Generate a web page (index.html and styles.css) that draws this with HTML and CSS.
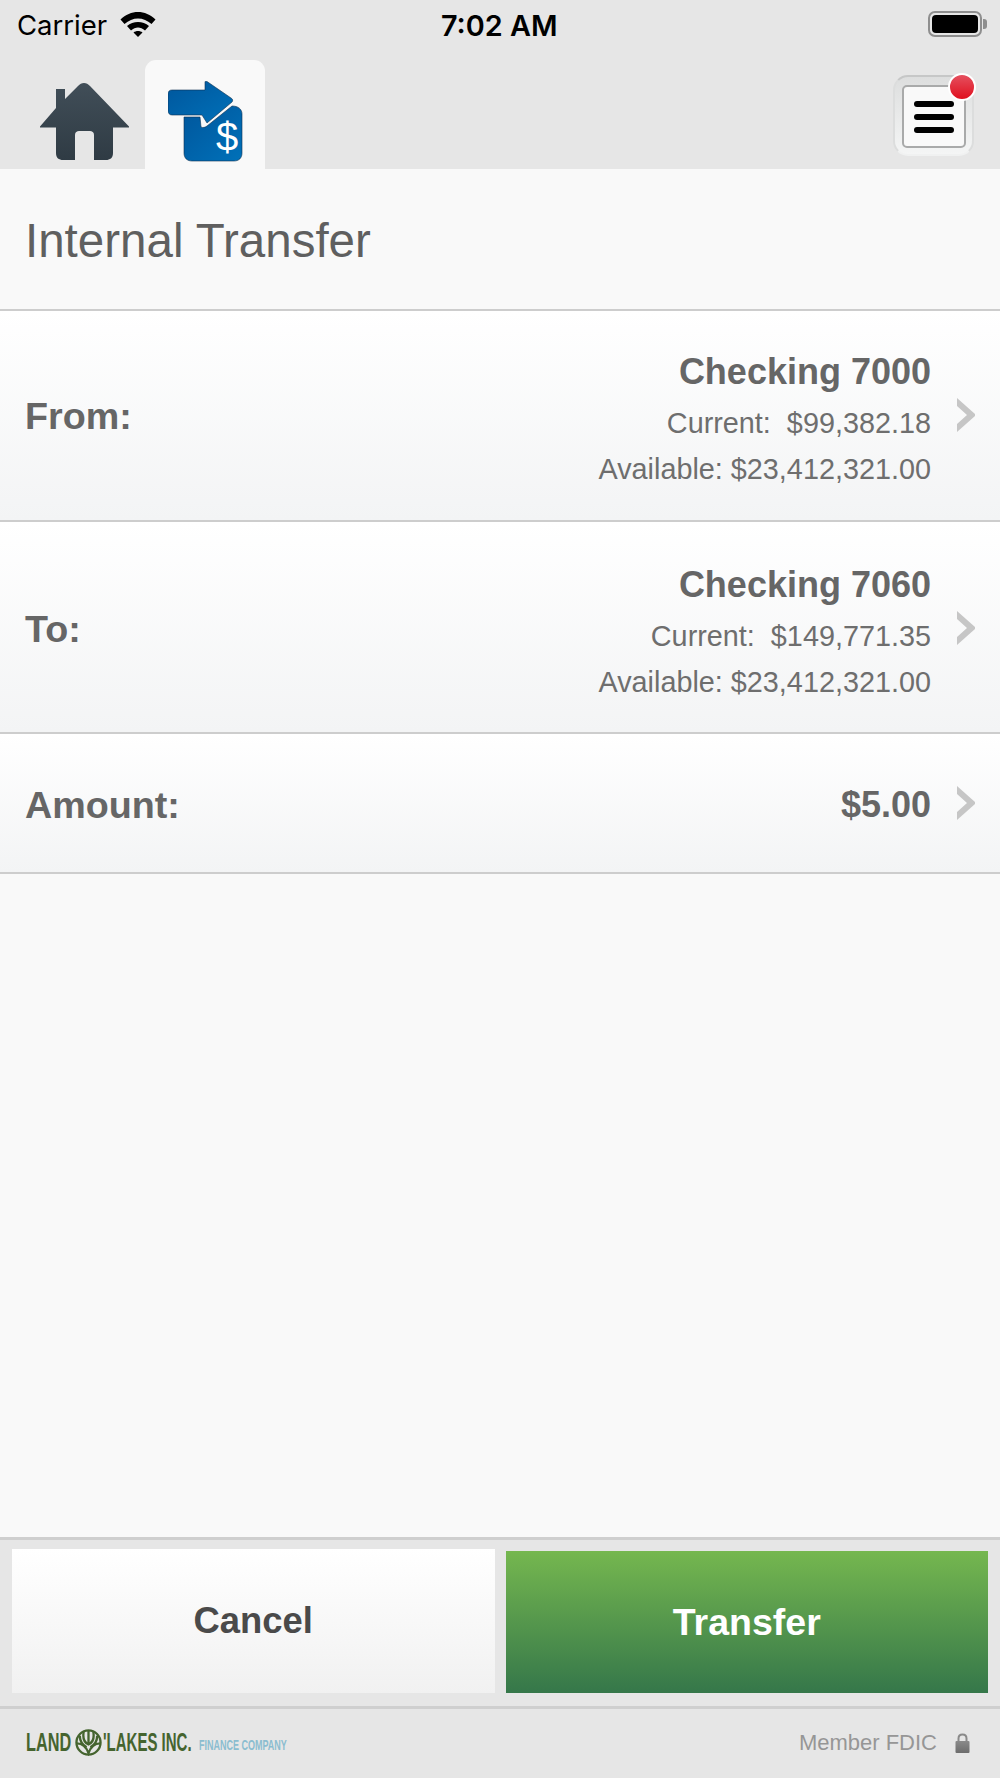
FILE: index.html
```html
<!DOCTYPE html>
<html lang="en">
<head>
    <meta charset="UTF-8">
    <meta name="viewport" content="width=device-width, initial-scale=1.0">
    <title>Internal Transfer</title>
    <link rel="stylesheet" href="styles.css">
</head>
<body>
    <div class="app">
        <div class="status-bar">
            <div class="status-left">
                <span>Carrier</span>
                <svg class="wifi" viewBox="0 0 36 26" width="36" height="26">
                    <path d="M0.500 8.500C10.500 -1.500 25.500 -1.500 35.500 8.500L31.500 13C23.500 5.500 12.500 5.500 4.500 13Z"/>
                    <path d="M7 15C13 9.500 23 9.500 29 15L25 19.500C20.500 15.500 15.500 15.500 11 19.500Z"/>
                    <path d="M13.500 21.500C16 19.500 20 19.500 22.500 21.500L18 26Z"/>
                </svg>
            </div>
            <span class="status-time">7:02 AM</span>
            <div class="battery"><div class="battery-fill"></div><div class="battery-tip"></div></div>
        </div>

        <header class="topbar">
            <nav class="tabs">
                <a class="tab">
                    <svg viewBox="0 0 90 78" width="90" height="78">
                        <defs>
                            <linearGradient id="homeGrad" x1="0" y1="0" x2="0" y2="1">
                                <stop offset="0" stop-color="#414e58"/>
                                <stop offset="1" stop-color="#2f3b44"/>
                            </linearGradient>
                        </defs>
                        <path fill="url(#homeGrad)" d="M44 0C41.500 0 40 1 38 3L25 16V6H16V25L0 43.500V44.500H16V70C16 75 19 77 23 77H35V52C35 49 37 48 39 48H50C52 48 54 49 54 52V77H66C70 77 73 75 73 70V44.500H89V43.500L50 3C48 1 46.500 0 44 0Z"/>
                    </svg>
                </a>
                <a class="tab tab-active">
                    <svg viewBox="0 0 75 81" width="75" height="81">
                        <defs>
                            <linearGradient id="blueGrad" x1="0" y1="0" x2="1" y2="1">
                                <stop offset="0" stop-color="#00569c"/>
                                <stop offset="1" stop-color="#0071b9"/>
                            </linearGradient>
                        </defs>
                        <path fill="url(#blueGrad)" stroke="#0d3050" stroke-width="0.6" d="M16 36H32L33 46C35 47 37 46.500 39 45L64 25C70 25 74 28 74 33V72C74 77 71 80 66 80H24C19 80 16 77 16 72Z"/>
                        <path fill="url(#blueGrad)" stroke="#0d3050" stroke-width="0.6" d="M4 9H37V1C37 0 38 0 39 0.500L63 17C65 18 65 20 64 21L39 42L34 34H4C1.500 34 0 32 0 30V13C0 10.500 1.500 9 4 9Z"/>
                        <text class="dollar" x="59" y="70">$</text>
                    </svg>
                </a>
            </nav>
            <div class="menu-btn">
                <div class="menu-inner">
                    <span></span><span></span><span></span>
                </div>
                <div class="menu-badge"></div>
            </div>
        </header>

        <main class="content">
            <h1 class="page-title">Internal Transfer</h1>

            <div class="row row-from">
                <div class="row-label">From:</div>
                <div class="row-value">
                    <div class="acct-name">Checking 7000</div>
                    <div class="acct-line">Current: &nbsp;$99,382.18</div>
                    <div class="acct-line">Available: $23,412,321.00</div>
                </div>
                <svg class="chevron" viewBox="0 0 20 34" width="20" height="34"><path d="M1 0L19 16V18L1 34V26L11 17L1 8Z"/></svg>
            </div>

            <div class="row row-to">
                <div class="row-label">To:</div>
                <div class="row-value">
                    <div class="acct-name">Checking 7060</div>
                    <div class="acct-line">Current: &nbsp;$149,771.35</div>
                    <div class="acct-line">Available: $23,412,321.00</div>
                </div>
                <svg class="chevron" viewBox="0 0 20 34" width="20" height="34"><path d="M1 0L19 16V18L1 34V26L11 17L1 8Z"/></svg>
            </div>

            <div class="row row-amount">
                <div class="row-label">Amount:</div>
                <div class="row-value">
                    <div class="acct-name">$5.00</div>
                </div>
                <svg class="chevron" viewBox="0 0 20 34" width="20" height="34"><path d="M1 0L19 16V18L1 34V26L11 17L1 8Z"/></svg>
            </div>
        </main>

        <div class="actions">
            <button class="btn btn-cancel">Cancel</button>
            <button class="btn btn-transfer">Transfer</button>
        </div>

        <footer class="footer">
            <div class="logo">
                <span class="logo-name logo-land">LAND</span>
                <svg class="logo-mark" viewBox="0 0 28 28" width="27" height="27">
                    <circle cx="14" cy="14" r="12.500"/>
                    <path d="M9 3C8 9 9 14 14 16C19 14 20 9 19 3M14 2V16M2 15C7 15 11 17 14 25C17 17 21 15 26 15M5 7C5 12 7 16 12 19M23 7C23 12 21 16 16 19"/>
                </svg>
                <span class="logo-name logo-lakes">'LAKES INC.</span>
                <span class="logo-sub">FINANCE COMPANY</span>
            </div>
            <div class="fdic">
                <span>Member FDIC</span>
                <svg viewBox="0 0 15 20" width="15" height="20">
                    <defs>
                        <linearGradient id="lockGrad" x1="0" y1="0" x2="0" y2="1">
                            <stop offset="0" stop-color="#8a8a8a"/>
                            <stop offset="1" stop-color="#6c6c6c"/>
                        </linearGradient>
                    </defs>
                    <path d="M3.500 9V5.500C3.500 3 5 1.500 7.500 1.500C10 1.500 11.500 3 11.500 5.500V9" fill="none" stroke="#8a8a8a" stroke-width="2"/>
                    <rect x="0.500" y="8" width="14" height="12" rx="1" fill="url(#lockGrad)"/>
                </svg>
            </div>
        </footer>
    </div>
</body>
</html>
```

FILE: styles.css
```css
* {
    box-sizing: border-box;
}
body {
    margin: 0;
    font-family: 'Liberation Sans', Arial, sans-serif;
    background-color: #e6e6e6;
    color: #666666;
}
.app {
    width: 1000px;
    height: 1778px;
    display: flex;
    flex-direction: column;
}

/* status bar */
.status-bar {
    height: 60px;
    padding: 0 18px 0 17px;
    display: flex;
    align-items: flex-start;
    justify-content: space-between;
    position: relative;
    color: #000000;
    font-family: 'Inter', sans-serif;
    font-size: 27.500px;
}
.status-left {
    display: flex;
    align-items: center;
    gap: 13px;
    height: 50px;
}
.wifi {
    fill: #000000;
    margin-top: -2px;
}
.status-time {
    position: absolute;
    left: 441px;
    top: 8px;
    font-weight: 600;
    font-size: 28.800px;
}
.battery {
    width: 54px;
    height: 26px;
    margin-top: 11px;
    border: 2px solid #8e8e8e;
    border-radius: 7px;
    padding: 2px;
    position: relative;
}
.battery-fill {
    width: 100%;
    height: 100%;
    background-color: #000000;
    border-radius: 4px;
}
.battery-tip {
    position: absolute;
    right: -7px;
    top: 6px;
    width: 4px;
    height: 10px;
    background-color: #8e8e8e;
    border-radius: 0 3px 3px 0;
}

/* header */
.topbar {
    height: 109px;
    display: flex;
    justify-content: space-between;
    position: relative;
}
.tabs {
    display: flex;
    padding-left: 25px;
}
.tab {
    width: 120px;
    display: flex;
    justify-content: center;
    padding-top: 23px;
}
.tab-active {
    background-color: #f9f9f9;
    border-radius: 11px 11px 0 0;
    padding-top: 21px;
}
.dollar {
    font-family: 'Liberation Sans', sans-serif;
    font-size: 40px;
    fill: #ffffff;
    text-anchor: middle;
}
.menu-btn {
    width: 81px;
    height: 81px;
    margin: 15px 26px 0 0;
    padding: 8px 6px 6px 7px;
    border: 2px solid;
    border-color: #c6c7c7 #dcdddd #f0f1f1;
    border-radius: 15px;
    background: linear-gradient(#dddede, #f4f5f5);
    position: relative;
}
.menu-inner {
    height: 100%;
    background-color: #f9f9f9;
    border: 2px solid #a9aaaa;
    border-radius: 5px;
    display: flex;
    flex-direction: column;
    align-items: center;
    justify-content: center;
    gap: 7px;
}
.menu-inner span {
    display: block;
    width: 40px;
    height: 6px;
    background-color: #000000;
    border-radius: 3px;
}
.menu-badge {
    position: absolute;
    right: -4px;
    top: -4px;
    width: 28px;
    height: 28px;
    border-radius: 50%;
    border: 2px solid #ffffff;
    background: linear-gradient(#e5505f, #e0101e);
}

/* main */
.content {
    flex: 1;
    background-color: #f9f9f9;
    border-bottom: 3px solid #cfcfcf;
}
.page-title {
    margin: 0;
    height: 142px;
    padding: 2px 25px 0;
    display: flex;
    align-items: center;
    font-size: 47.500px;
    font-weight: normal;
    color: #5f5f5f;
    border-bottom: 2px solid #cdcdcd;
}
.row {
    display: flex;
    align-items: center;
    padding: 2px 24px 0 25px;
    background: linear-gradient(#ffffff, #f3f4f5);
    border-bottom: 2px solid #cdcdcd;
}
.row-from {
    height: 211px;
}
.row-to {
    height: 212px;
    padding-top: 5px;
}
.row-amount {
    height: 140px;
    padding-top: 4px;
}
.row-from .row-value,
.row-to .row-value {
    padding-top: 8px;
}
.row-label {
    flex: 1;
    font-size: 37.700px;
    font-weight: bold;
    color: #666666;
}
.row-value {
    text-align: right;
    margin-right: 25px;
}
.acct-name {
    font-size: 36px;
    font-weight: bold;
    color: #666666;
    line-height: 46px;
}
.acct-name + .acct-line {
    margin-top: 5px;
}
.acct-line {
    font-size: 28.800px;
    line-height: 46px;
    color: #6e6e6e;
}
.chevron {
    fill: #c6c6c6;
    flex-shrink: 0;
    margin-top: -4px;
}

/* buttons */
.actions {
    height: 166px;
    padding: 9px 12px 0;
    display: flex;
    gap: 11px;
    align-items: flex-start;
}
.btn {
    flex: 1;
    border: none;
    padding: 0;
    font-family: inherit;
    font-weight: bold;
}
.btn-cancel {
    height: 144px;
    font-size: 36.400px;
    background: linear-gradient(#ffffff, #f1f1f1);
    color: #4a4a4a;
}
.btn-transfer {
    height: 142px;
    margin-top: 2px;
    font-size: 37.500px;
    background: linear-gradient(#75b74f, #35774a);
    color: #ffffff;
}

/* footer */
.footer {
    flex: 0 0 72px;
    border-top: 3px solid #cfcfcf;
    padding: 0 30px 2px 26px;
    display: flex;
    align-items: center;
    justify-content: space-between;
}
.logo {
    display: flex;
    align-items: center;
}
/* the logo lettering is a condensed face, none is installed so squeeze it */
.logo-name {
    display: block;
    font-weight: bold;
    font-size: 25px;
    color: #45642f;
    white-space: nowrap;
    transform: scaleX(0.650);
    transform-origin: left center;
}
.logo-land {
    width: 47px;
}
.logo-lakes {
    width: 87px;
    margin-left: 1px;
    transform: scaleX(0.600);
}
.logo-mark {
    flex-shrink: 0;
    margin-left: 2px;
    fill: none;
    stroke: #45642f;
    stroke-width: 2.400;
}
.logo-sub {
    display: block;
    width: 87px;
    font-weight: bold;
    font-size: 15px;
    color: #8bbdd0;
    margin-left: 9px;
    margin-top: 3px;
    white-space: nowrap;
    transform: scaleX(0.600);
    transform-origin: left center;
}
.fdic {
    display: flex;
    align-items: center;
    gap: 18px;
    font-size: 22px;
    color: #969696;
}
```
